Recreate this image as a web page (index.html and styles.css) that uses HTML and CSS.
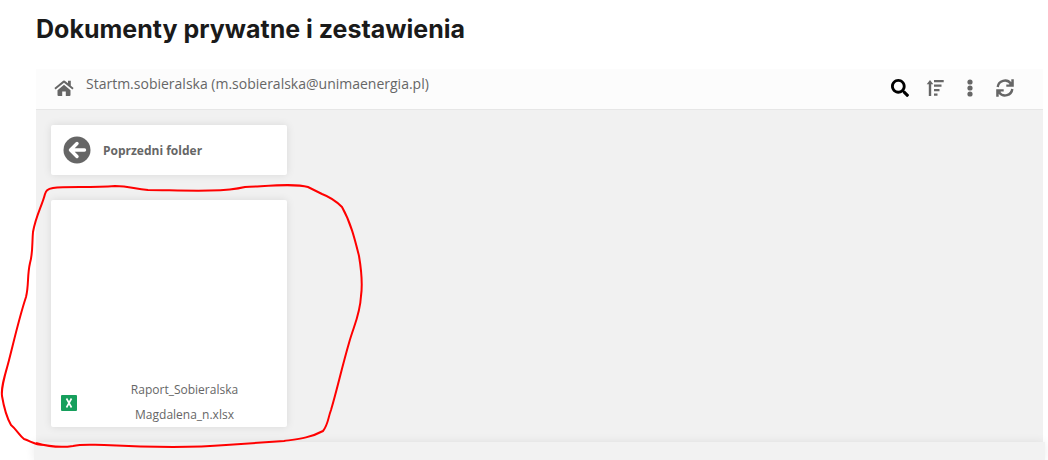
FILE: index.html
```
<!DOCTYPE html>
<html lang="pl">
  <head>
    <meta charset="UTF-8" />
    <meta name="viewport" content="width=device-width, initial-scale=1.0" />
    <title>Dokumenty prywatne i zestawienia</title>
    <link rel="stylesheet" href="styles.css">
  </head>
  <body>
    <main class="page">
      <h1 class="title">Dokumenty prywatne i zestawienia</h1>
      <section class="manager">
        <header class="toolbar">
          <a href="#" class="home" aria-label="Start">
            <svg class="home-icon" viewBox="0 0 20 16">
              <path d="M3.5 10.200 10 4.800l6.500 5.400V15a1 1 0 0 1-1 1h-3.700v-4.500H8.200V16H4.500a1 1 0 0 1-1-1z" />
              <path d="M.4 8.100 9.200.700a1.300 1.300 0 0 1 1.600 0L14 3.300V.700h2.800v5l2.800 2.400-1.100 1.400L10 2.700 1.500 9.500z" />
            </svg>
          </a>
          <span class="path">Startm.sobieralska (m.sobieralska@unimaenergia.pl)</span>
          <div class="actions">
            <button type="button" class="action search" aria-label="Szukaj">
              <svg viewBox="0 0 512 512">
                <path d="M505 442.700L405.300 343c-4.500-4.500-10.600-7-17-7H372c27.600-35.300 44-79.700 44-128C416 93.100 322.900 0 208 0S0 93.100 0 208s93.100 208 208 208c48.300 0 92.700-16.400 128-44v16.300c0 6.400 2.500 12.500 7 17l99.700 99.700c9.400 9.400 24.600 9.400 33.900 0l28.300-28.300c9.400-9.400 9.400-24.600.1-34zM208 336c-70.700 0-128-57.200-128-128 0-70.700 57.200-128 128-128 70.700 0 128 57.200 128 128 0 70.700-57.200 128-128 128z" />
              </svg>
            </button>
            <button type="button" class="action" aria-label="Sortuj">
              <svg viewBox="0 0 18 18">
                <path d="M4 1 7.300 5.200H5.200V17H2.800V5.200H.7zM8 1h9.700v2.300H8zM8 5.500h7.500v2.300H8zM8 10h5.500v2.300H8zM8 14.500h3.500v2.300H8z" />
              </svg>
            </button>
            <button type="button" class="action" aria-label="Menu">
              <svg viewBox="0 0 18 18">
                <circle cx="9" cy="3" r="2.600" />
                <circle cx="9" cy="9" r="2.600" />
                <circle cx="9" cy="15" r="2.600" />
              </svg>
            </button>
            <button type="button" class="action" aria-label="Odśwież">
              <svg viewBox="0 0 18 18">
                <path class="arc" d="M1.700 8A7.300 7.300 0 0 1 14.800 4.500M16.300 10A7.300 7.300 0 0 1 3.200 13.500" />
                <path d="M17.800.3v7.500h-7.500V5.400h2.800L15.300 3V.3zM.2 17.700v-7.500h7.500v2.400H4.900L2.700 15v2.700z" />
              </svg>
            </button>
          </div>
        </header>
        <div class="files">
          <a href="#" class="card back">
            <svg class="back-icon" viewBox="0 0 28 28">
              <circle cx="14" cy="14" r="13.500" />
              <path class="arrow" d="M21.500 14H8M14 7.500 7.500 14l6.500 6.500" />
            </svg>
            <span>Poprzedni folder</span>
          </a>
          <a href="#" class="card file">
            <svg class="xls-icon" viewBox="0 0 16 16">
              <rect width="16" height="16" rx="1" />
              <path class="cross" d="M5.500 3.500 10.500 12.500M10.500 3.500 5.500 12.500" />
            </svg>
            <span class="file-name">Raport_Sobieralska<br>Magdalena_n.xlsx</span>
          </a>
        </div>
      </section>
      <div class="bottom"></div>
      <svg class="marker" width="370" height="460" viewBox="0 0 370 460">
        <path d="M36 443C50 447 60 448 73 446C82 444 92 445 104 445C145 447 190 448 226 445L284 441C298 439 310 438 323 431C328 425 328 418 331 410C337 390 342 367 349 343C354 325 360 315 361 296C363 282 361 268 359 256C355 240 351 223 342 207C335 200 330 197 322 194L308 187C295 183 268 186 245 187C220 193 175 190 148 190C134 189 130 186 115 186C90 188 66 186 53 188C47 189 46 191 45 194C42 206 36 215 33 232C32 242 33 253 30 263C27 276 29 285 26 297C19 318 13 345 8 364C4 378 1 388 2 396C4 408 7 418 11 425C17 430 19 435 24 439C31 441 34 445 44 445" />
      </svg>
    </main>
  </body>
</html>
```
FILE: styles.css
```
* {
  box-sizing: border-box;
  margin: 0;
  padding: 0;
}
body {
  background: #fff;
  color: #666;
  font-family: "Open Sans", sans-serif;
}
a {
  color: inherit;
  text-decoration: none;
}
svg {
  display: block;
  fill: #666;
}
.page {
  position: relative;
  display: flex;
  flex-direction: column;
  min-height: 100vh;
  overflow: hidden;
}
.title {
  padding: 13px 36px 24px;
  color: #1a1a1a;
  font-family: Inter, sans-serif;
  font-size: 25px;
  font-weight: 700;
  line-height: 32px;
}
.manager {
  margin: 0 5px 0 36px;
  background: #f1f1f1;
}
.toolbar {
  display: flex;
  align-items: center;
  height: 41px;
  padding: 0 21px 3px 18px;
  background: #fcfcfc;
  border-bottom: 1px solid #e6e6e6;
}
.home-icon {
  width: 20px;
  height: 16px;
}
.path {
  padding: 0 0 7px 12px;
  font-size: 14px;
  line-height: 20px;
}
.actions {
  display: flex;
  margin-left: auto;
}
.action {
  width: 35px;
  height: 36px;
  border: 0;
  background: none;
  cursor: pointer;
}
.action svg {
  width: 18px;
  height: 18px;
  margin: 0 auto;
}
.search svg {
  fill: #000;
}
.arc {
  fill: none;
  stroke: #666;
  stroke-width: 2.4;
}
.files {
  display: flex;
  flex-direction: column;
  align-items: flex-start;
  gap: 25px;
  padding: 15px;
}
.card {
  display: flex;
  width: 236px;
  background: #fff;
  border-radius: 2px;
  box-shadow: 0 0 8px rgba(0, 0, 0, 0.1);
  font-size: 12px;
}
.back {
  align-items: center;
  gap: 12px;
  height: 50px;
  padding: 0 12px;
  font-weight: 700;
}
.back-icon {
  width: 28px;
  height: 28px;
}
.arrow {
  fill: none;
  stroke: #fff;
  stroke-width: 3.4;
  stroke-linecap: round;
  stroke-linejoin: round;
}
.file {
  align-items: flex-end;
  padding-top: 177px;
}
.xls-icon {
  width: 16px;
  height: 16px;
  margin: 0 0 16px 10px;
  fill: #169f5c;
}
.cross {
  stroke: #fff;
  stroke-width: 1.6;
}
.file-name {
  flex: 1;
  padding-left: 5px;
  line-height: 25px;
  text-align: center;
}
.bottom {
  flex: 1;
  margin: 0 3px 0 34px;
  background: #f2f2f2;
  box-shadow: 0 0 10px rgba(0, 0, 0, 0.08);
}
.marker {
  position: absolute;
  top: 0;
  left: 0;
  fill: none;
  stroke: #f00;
  stroke-width: 2;
  pointer-events: none;
}
```
